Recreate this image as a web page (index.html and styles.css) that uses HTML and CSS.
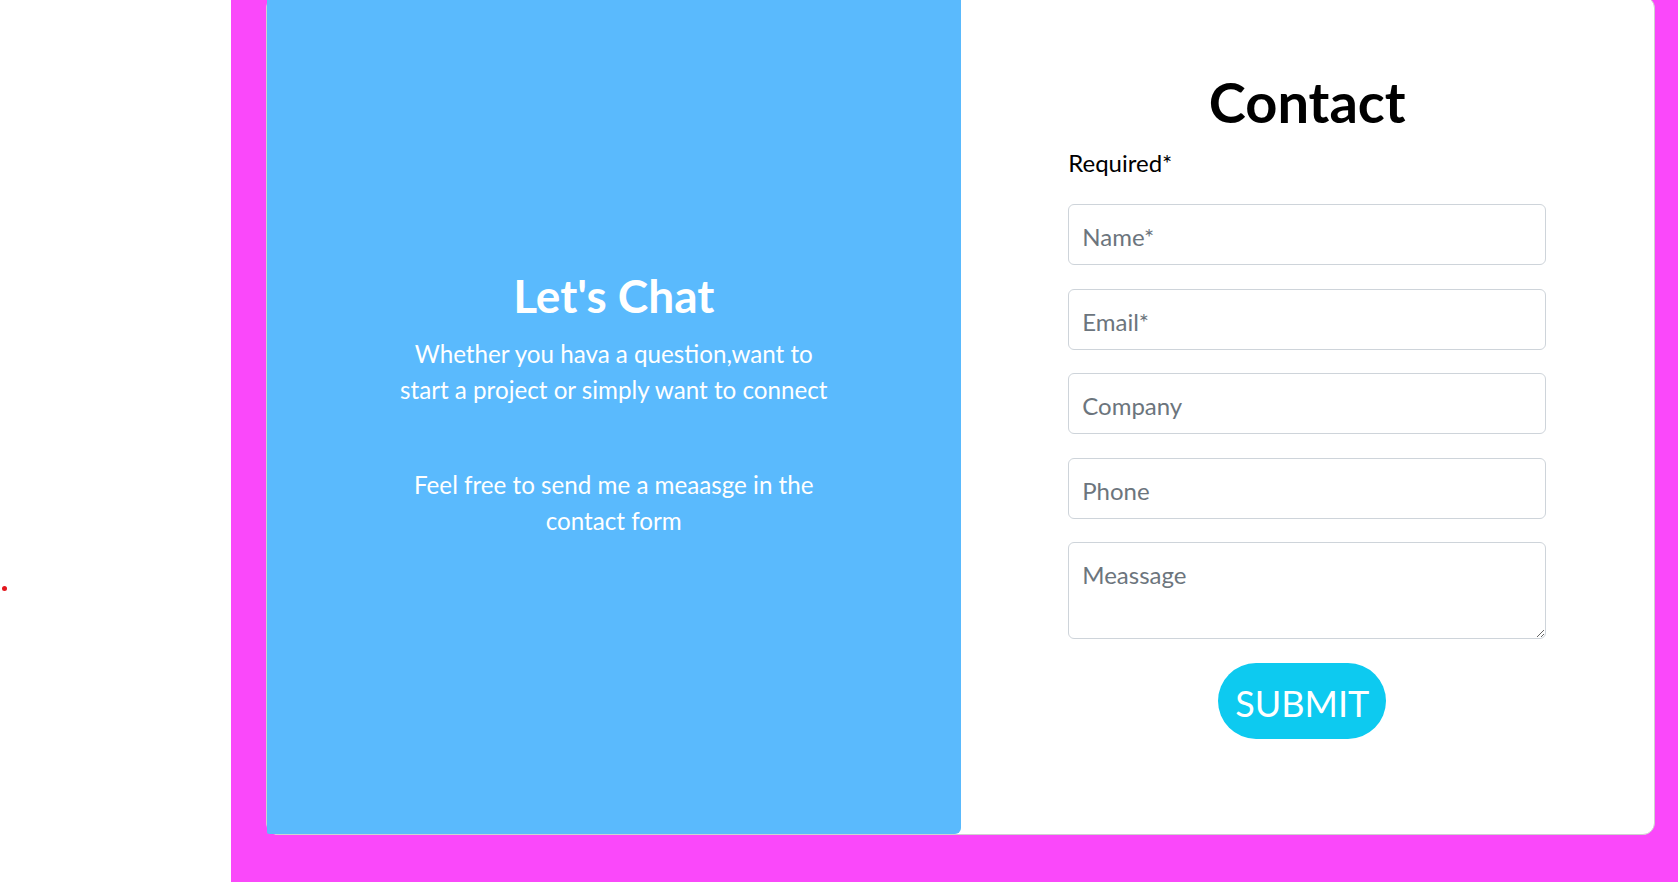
FILE: index.html
```html
<!DOCTYPE html>
<html lang="en">
<head>
<meta charset="utf-8">
<title>Contact</title>
<link rel="stylesheet" href="styles.css">
</head>
<body>
<div class="page">
  <aside class="gutter"><span class="dot"></span></aside>
  <main class="stage">
    <section class="card">
      <div class="intro">
        <h2 class="intro-title">Let's Chat</h2>
        <p class="intro-text">Whether you hava a question,want to start a project or simply want to connect</p>
        <p class="intro-text intro-text-second">Feel free to send me a meaasge in the contact form</p>
      </div>
      <div class="contact">
        <h1 class="contact-title">Contact</h1>
        <form class="form">
          <p class="required">Required*</p>
          <input class="field" type="text" placeholder="Name*">
          <input class="field" type="email" placeholder="Email*">
          <input class="field" type="text" placeholder="Company">
          <input class="field" type="tel" placeholder="Phone">
          <textarea class="field field-area" placeholder="Meassage"></textarea>
          <div class="actions"><button class="submit" type="button">SUBMIT</button></div>
        </form>
      </div>
    </section>
  </main>
</div>
</body>
</html>
```
FILE: styles.css
```css
html, body {
  margin: 0;
  padding: 0;
}
body {
  font-family: Lato, "Open Sans", sans-serif;
  background: #fff;
}
.page {
  display: flex;
  height: 882px;
  overflow: hidden;
}
.gutter {
  flex: none;
  width: 231px;
  box-sizing: border-box;
  padding: 586px 0 0 2px;
  background: #fff;
}
.dot {
  display: block;
  width: 5px;
  height: 5px;
  border-radius: 50%;
  background: #e3161d;
}
.stage {
  flex: 1;
  display: flex;
  flex-direction: column;
  padding: 0 23px 47px 35px;
  background: #fa48fa;
}
.card {
  flex: 1;
  margin-top: -4px;
  display: flex;
  background: #fff;
  border: 1px solid #cfcfcf;
  border-radius: 12px;
}
.intro {
  flex: 1;
  background: #5abafd;
  color: #fff;
  text-align: center;
  padding-top: 271px;
  border-radius: 0 0 6px 2px;
}
.intro-title {
  margin: 0 0 13px;
  font-size: 46px;
  font-weight: 700;
  line-height: 1.2;
}
.intro-text {
  margin: 0 auto;
  width: 440px;
  font-size: 24.2px;
  line-height: 36px;
}
.intro-text-second {
  margin-top: 59px;
}
.contact {
  flex: 1;
  display: flex;
  flex-direction: column;
  align-items: center;
  padding-top: 71px;
}
.contact-title {
  margin: 0 0 10px;
  font-size: 56px;
  font-weight: 700;
  line-height: 1.2;
  color: #000;
}
.form {
  width: 478px;
  display: flex;
  flex-direction: column;
}
.required {
  margin: 0 0 23px;
  font-size: 24px;
  line-height: 36px;
  color: #000;
}
.field {
  box-sizing: border-box;
  height: 61px;
  margin: 0 0 23.5px;
  padding: 4px 13px 0;
  border: 1px solid #ced4da;
  border-radius: 6px;
  font-family: Lato, "Open Sans", sans-serif;
  font-size: 24px;
  color: #212529;
  background: #fff;
  outline: none;
}
.field::placeholder {
  color: #6c757d;
  opacity: 1;
}
.field-area {
  height: 97px;
  padding: 14px 13px 10px;
  line-height: 36px;
  margin-bottom: 23.5px;
  resize: both;
}
.actions {
  display: flex;
  justify-content: center;
}
.submit {
  width: 168px;
  height: 76px;
  margin-right: 10px;
  border: none;
  border-radius: 38px;
  background: #0dcaf0;
  color: #fff;
  font-family: Lato, "Open Sans", sans-serif;
  font-size: 36px;
  padding: 4px 0 0;
  cursor: pointer;
}
```
